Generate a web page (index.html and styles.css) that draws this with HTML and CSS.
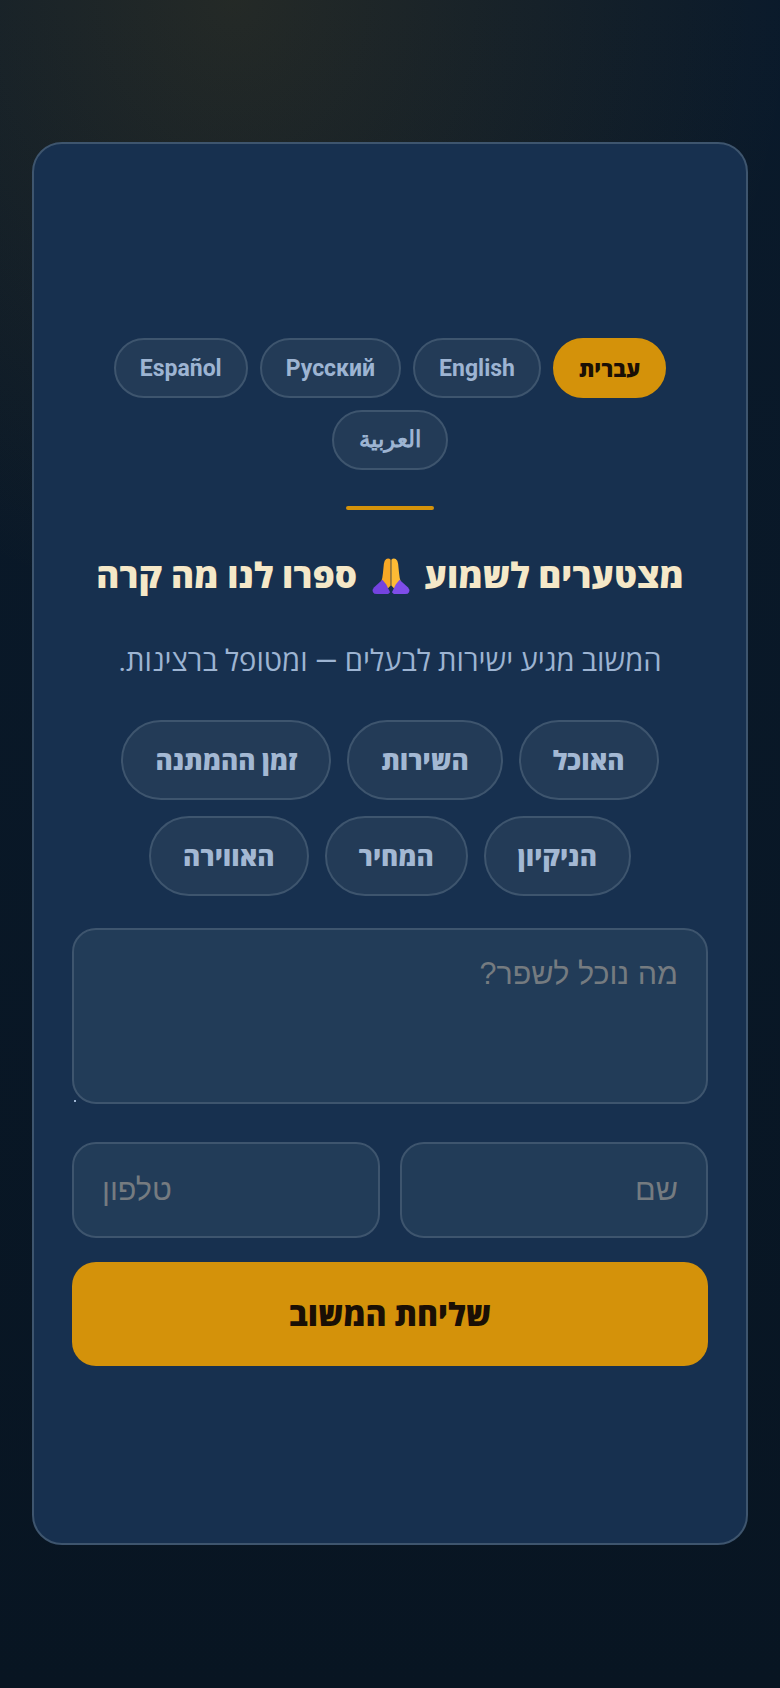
FILE: index.html
```html
<!DOCTYPE html>
<html lang="he" dir="rtl">
<head>
    <meta charset="UTF-8">
    <meta name="viewport" content="width=device-width, initial-scale=1.0">
    <title>משוב</title>
    <link rel="stylesheet" href="styles.css">
</head>
<body>
    <div class="card">
        <div class="langs">
            <button class="lang active">עברית</button>
            <button class="lang">English</button>
            <button class="lang">Русский</button>
            <button class="lang">Español</button>
            <button class="lang lang-ar">العربية</button>
        </div>
        <div class="divider"></div>
        <h2>מצטערים לשמוע
            <svg class="pray" viewBox="0 0 40 40" aria-hidden="true">
                <path fill="#f9a825" d="M19.6 3 Q18 1 15 2 Q13 3 12.5 7 L11.5 17 Q11 22 10 25 L15 35 L19.6 30Z"/>
                <path fill="#fdbb35" d="M20.4 3 Q22 1 25 2 Q27 3 27.5 7 L28.5 17 Q29 22 30 25 L25 35 L20.4 30Z"/>
                <path fill="#7443e0" d="M11 24 L2 32 Q0 34 1 37 Q2 39 5 39 H17 L19 37 L15 29Z"/>
                <path fill="#7f4de8" d="M29 24 L38 32 Q40 34 39 37 Q38 39 35 39 H23 L21 37 L25 29Z"/>
            </svg>
            ספרו לנו מה קרה</h2>
        <p class="sub">המשוב מגיע ישירות לבעלים — ומטופל ברצינות.</p>
        <div class="chips">
            <button class="chip">האוכל</button>
            <button class="chip">השירות</button>
            <button class="chip">זמן ההמתנה</button>
            <button class="chip">הניקיון</button>
            <button class="chip">המחיר</button>
            <button class="chip">האווירה</button>
        </div>
        <form class="form">
            <div class="note">
                <textarea placeholder="מה נוכל לשפר?"></textarea>
            </div>
            <div class="row">
                <input type="text" placeholder="שם">
                <input type="tel" dir="ltr" placeholder="טלפון">
            </div>
            <button type="submit" class="send">שליחת המשוב</button>
        </form>
    </div>
</body>
</html>
```

FILE: styles.css
```css
* {
    box-sizing: border-box;
}
body {
    margin: 0;
    height: 1688px;
    padding: 142px 32px 143px;
    font-family: Roboto, "Open Sans", sans-serif;
    background:
        radial-gradient(ellipse 560px 620px at 30% 0, rgba(212, 146, 10, 0.13), transparent),
        linear-gradient(180deg, #0a1a2b, #081522);
}
.card {
    height: 100%;
    display: flex;
    flex-direction: column;
    justify-content: center;
    padding: 16px 38px 0;
    background-color: #17304f;
    border: 2px solid #3e556e;
    border-radius: 30px;
}
.langs {
    display: flex;
    flex-wrap: wrap;
    justify-content: center;
    gap: 12px;
}
.lang {
    height: 60px;
    padding: 2px 24px 0;
    font: 700 23px Roboto, "Open Sans", sans-serif;
    color: #9db4d2;
    background-color: #233b57;
    border: 2px solid #3e556e;
    border-radius: 30px;
}
.lang.active {
    padding: 0 24px;
    font-size: 22px;
    font-weight: 800;
    color: #1a0f05;
    background-color: #d4920a;
    border-color: #d4920a;
}
.lang-ar {
    padding: 0 25px;
}
.divider {
    width: 88px;
    height: 4px;
    margin: 36px auto 0;
    background-color: #d4920a;
    border-radius: 2px;
}
h2 {
    margin: 44px 0 0;
    font-size: 35px;
    line-height: 46px;
    font-weight: 800;
    text-align: center;
    color: #f5e8c8;
}
.pray {
    width: 38px;
    height: 38px;
    vertical-align: -7px;
    margin: 0 6px;
}
.sub {
    margin: 41px 0 0;
    font-size: 29.2px;
    line-height: 40px;
    text-align: center;
    color: #9db4d2;
}
.chips {
    display: flex;
    flex-wrap: wrap;
    justify-content: center;
    gap: 16px;
    margin-top: 39px;
}
.chip {
    height: 80px;
    padding: 0 32px;
    font: 800 26.2px Roboto, "Open Sans", sans-serif;
    color: #a3b8d3;
    background-color: #233b57;
    border: 2px solid #3e556e;
    border-radius: 40px;
}
.form {
    margin-top: 32px;
}
.note {
    position: relative;
}
.note::after {
    content: "";
    position: absolute;
    left: 2px;
    bottom: 2px;
    width: 2px;
    height: 2px;
    background-color: #9db4d2;
}
textarea, input {
    display: block;
    width: 100%;
    font: 400 30.5px "Liberation Sans", sans-serif;
    color: #fff;
    background-color: #223c58;
    border: 2px solid #3e556e;
    border-radius: 24px;
    padding: 24px 28px;
}
textarea {
    height: 176px;
    padding-top: 26px;
    resize: none;
}
textarea::placeholder, input::placeholder {
    color: #757b80;
}
.row {
    display: flex;
    gap: 20px;
    margin-top: 38px;
}
.row input {
    flex: 1;
    min-width: 0;
    height: 96px;
}
.send {
    display: block;
    width: 100%;
    height: 104px;
    margin-top: 24px;
    font: 800 32px Roboto, "Open Sans", sans-serif;
    color: #1a0f05;
    background-color: #d4920a;
    border: 0;
    border-radius: 24px;
}
```
